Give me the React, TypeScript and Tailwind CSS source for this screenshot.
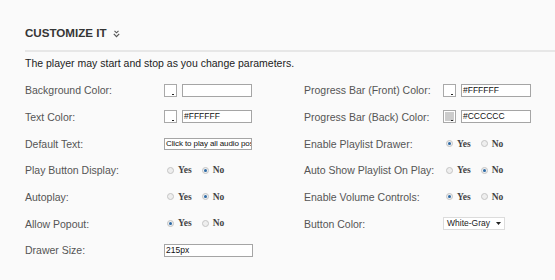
import React from "react";

const Swatch = ({ fill = "#ffffff" }: { fill?: string }) => (
  <div className="relative h-[13px] w-[13px] border border-[#a9a9a9] bg-white p-[1px] shrink-0">
    <div className="h-full w-full" style={{ background: fill }} />
    <div className="absolute bottom-[1px] right-[2px] h-[1px] w-[2px] bg-[#222]" />
  </div>
);

const TextBox = ({ value, w, small }: { value: string; w: string; small?: boolean }) => (
  <div
    className={`${w} ${small ? "h-[12px] text-[8px] leading-[10px] tracking-[-0.1px]" : "h-[13px] text-[8.5px] leading-[11px]"} overflow-hidden whitespace-nowrap border border-[#a5a5a5] bg-white pl-[1px] text-[#111]`}
  >
    {value}
  </div>
);

const ColorField = ({ value, fill }: { value: string; fill?: string }) => (
  <div className="flex items-center gap-[5px]">
    <Swatch fill={fill} />
    <TextBox value={value} w="w-[70px]" />
  </div>
);

const Radio = ({ checked }: { checked?: boolean }) => (
  <div className="flex h-[7px] w-[7px] shrink-0 items-center justify-center rounded-full border border-[#c4c4c4] bg-[#eeeeee]">
    {checked && <div className="h-[3px] w-[3px] rounded-full bg-[#2c6aa6]" />}
  </div>
);

const YesNo = ({ yes }: { yes: boolean }) => (
  <div className="flex items-center pl-[3px] font-['Liberation_Serif',serif] text-[9.5px] font-bold text-[#444]">
    <Radio checked={yes} />
    <span className="ml-[4px]">Yes</span>
    <div className="ml-[10px]">
      <Radio checked={!yes} />
    </div>
    <span className="ml-[4px]">No</span>
  </div>
);

const Select = ({ value }: { value: string }) => (
  <div className="flex h-[13px] w-[62px] items-center border border-[#dcdcdc] bg-white pl-[3px] text-[8.5px] text-[#222]">
    <span>{value}</span>
    <svg className="ml-[6px]" width="5" height="3" viewBox="0 0 5 3">
      <path d="M0 0 L5 0 L2.5 3 Z" fill="#222" />
    </svg>
  </div>
);

const Row = ({ label, children }: { label: string; children?: React.ReactNode }) => (
  <div className="flex h-[26.67px] items-center">
    <div className="w-[139px] shrink-0 text-[10.5px] leading-[12px] text-[#555]">{label}</div>
    <div>{children}</div>
  </div>
);

export default function App() {
  return (
    <div className="min-h-[280px] w-full overflow-hidden bg-[#fafafa] pl-[25px] font-['Liberation_Sans',Arial,sans-serif]">
      <div className="pt-[26px] flex h-[40px] items-center">
        <span className="text-[11.6px] font-bold leading-[14px] text-[#353535]">CUSTOMIZE IT</span>
        <svg className="ml-[6px] mt-[1px]" width="7" height="8" viewBox="0 0 7 8">
          <path d="M1.5 0.8 L3.5 2.8 L5.5 0.8" fill="none" stroke="#555" strokeWidth="1.1" />
          <path d="M0.8 3.8 L3.5 6.6 L6.2 3.8" fill="none" stroke="#555" strokeWidth="1.2" />
        </svg>
      </div>
      <div className="mt-[10px] h-[2px] w-full bg-[#e7e7e7]" />
      <div className="mt-[5px] text-[10.5px] leading-[13px] text-[#222]">
        The player may start and stop as you change parameters.
      </div>
      <div className="mt-[7px] grid grid-cols-[279px_1fr]">
        <div className="flex flex-col">
          <Row label="Background Color:">
            <ColorField value="" />
          </Row>
          <Row label="Text Color:">
            <ColorField value="#FFFFFF" />
          </Row>
          <Row label="Default Text:">
            <TextBox value="Click to play all audio pos" w="w-[88px]" small />
          </Row>
          <Row label="Play Button Display:">
            <YesNo yes={false} />
          </Row>
          <Row label="Autoplay:">
            <YesNo yes={false} />
          </Row>
          <Row label="Allow Popout:">
            <YesNo yes={true} />
          </Row>
          <Row label="Drawer Size:">
            <TextBox value="215px" w="w-[89px]" />
          </Row>
        </div>
        <div className="flex flex-col">
          <Row label="Progress Bar (Front) Color:">
            <ColorField value="#FFFFFF" />
          </Row>
          <Row label="Progress Bar (Back) Color:">
            <ColorField value="#CCCCCC" fill="#cccccc" />
          </Row>
          <Row label="Enable Playlist Drawer:">
            <YesNo yes={true} />
          </Row>
          <Row label="Auto Show Playlist On Play:">
            <YesNo yes={false} />
          </Row>
          <Row label="Enable Volume Controls:">
            <YesNo yes={true} />
          </Row>
          <Row label="Button Color:">
            <Select value="White-Gray" />
          </Row>
        </div>
      </div>
    </div>
  );
}
